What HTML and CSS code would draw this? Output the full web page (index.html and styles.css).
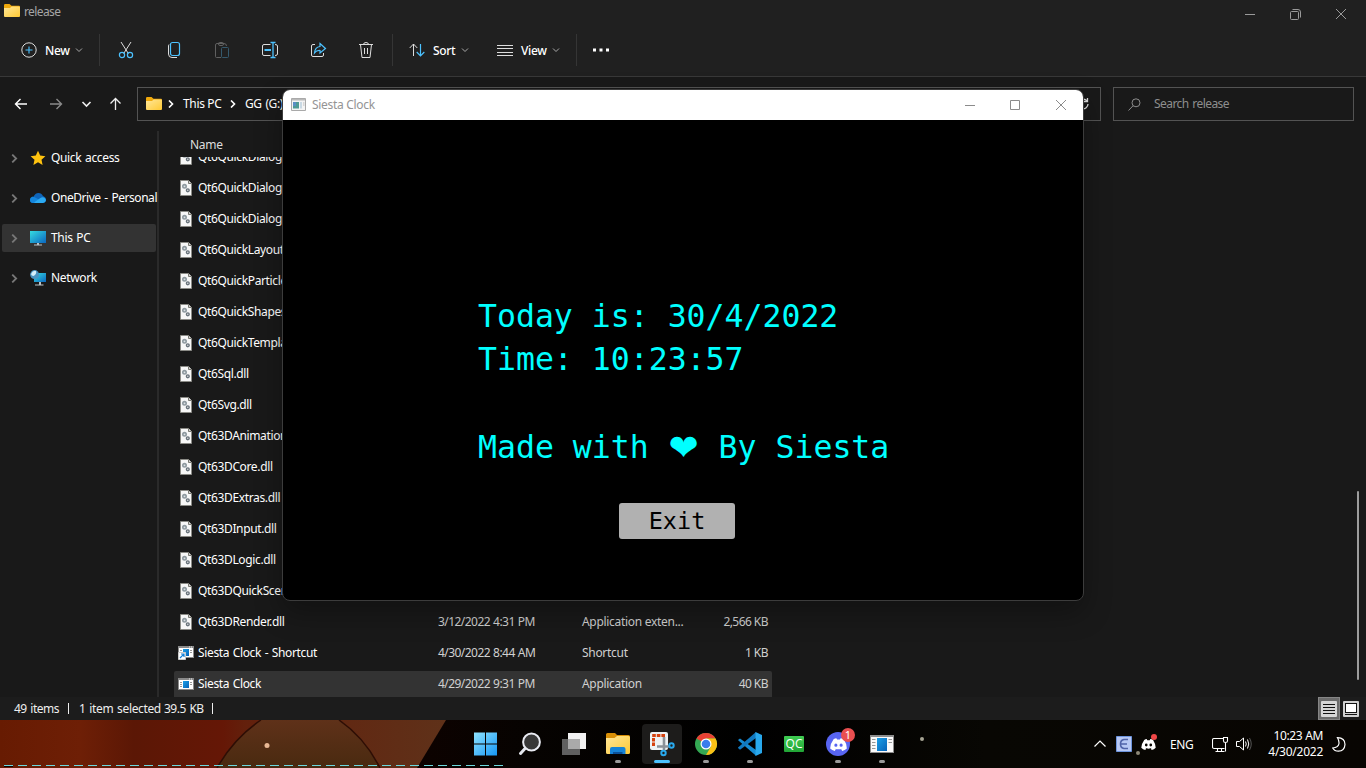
FILE: index.html
```html
<!DOCTYPE html>
<html lang="en">
<head>
<meta charset="utf-8">
<title>Siesta Clock</title>
<link rel="stylesheet" href="styles.css">
</head>
<body>
<svg class="defs" width="0" height="0">
  <defs>
    <linearGradient id="gFolder" x1="0" y1="0" x2="1" y2="1"><stop offset="0" stop-color="#ffe79a"/><stop offset="1" stop-color="#ffc933"/></linearGradient>
    <linearGradient id="gScreen" x1="0" y1="0" x2="1" y2="1"><stop offset="0" stop-color="#35dbe0"/><stop offset="1" stop-color="#0b66c0"/></linearGradient>
    <linearGradient id="gBlue" x1="0" y1="0" x2="1" y2="1"><stop offset="0" stop-color="#1ba0e8"/><stop offset="1" stop-color="#0562b8"/></linearGradient>
    <linearGradient id="gWin" x1="0" y1="0" x2="1" y2="1"><stop offset="0" stop-color="#8fe3ff"/><stop offset="1" stop-color="#1596f5"/></linearGradient>
    <symbol id="folder" viewBox="0 0 16 13"><path d="M0 1.2Q0 0 1.2 0H5.5L7.5 1.8H15Q16 1.8 16 3V6H0z" fill="#f0a90c"/><path d="M0 4H6L7.6 2.6H15Q16 2.6 16 3.6V12Q16 13 15 13H1Q0 13 0 12z" fill="url(#gFolder)"/></symbol>
    <symbol id="dll" viewBox="0 0 12 16"><path d="M.5 .5H8.5L11.5 3.5V15.5H.5z" fill="#f7f7f7" stroke="#8b8b86"/><path d="M8.5 .5V3.5H11.5" fill="#d5d5d5" stroke="#77776f"/><circle cx="4.5" cy="6.3" r="1.7" fill="#dde2e6" stroke="#8e999f" stroke-width="1.6"/><circle cx="7.8" cy="10.3" r="1.4" fill="#e8e8e8" stroke="#68727a" stroke-width="1.4"/></symbol>
    <symbol id="app" viewBox="0 0 16 12"><path d="M0 0H16V12H0z" fill="#8a8a8a"/><path d="M1 2H15V11H1z" fill="#fff"/><path d="M5 3H11V10H5z" fill="url(#gBlue)"/><path d="M2 4.500H4M2 6.500H4M2 8.500H4M12 4.500H14M12 6.500H14" stroke="#999"/><path d="M11 1h1M13 1h1" stroke="#eee"/></symbol>
    <symbol id="lnk" viewBox="0 0 16 14"><use href="#app" width="16" height="12"/><path d="M.5 6.500H7.500V13.500H.5z" fill="#fff" stroke="#ccc"/><path d="M2 12L5.600 8.400M3 8H6V11" fill="none" stroke="#1280d8" stroke-width="1.200"/></symbol>
    <symbol id="chev" viewBox="0 0 8 8"><path d="M1 2.500L4 5.500L7 2.500" fill="none" stroke="currentColor"/></symbol>
    <symbol id="right" viewBox="0 0 8 8"><path d="M2 .5L5.500 4L2 7.500" fill="none" stroke="currentColor" stroke-width="1.600"/></symbol>
    <symbol id="disc" viewBox="0 0 24 18"><path d="M5 1.5Q7 .3 9 0L10 2Q12 1.7 14 2L15 0Q17.500 .3 19.500 1.500Q23.500 7.500 23.800 14.500Q21 17.300 17.300 18L15.700 15.700L18 14.500Q12 17.200 6 14.500L8.300 15.700L6.700 18Q3 17.300 .2 14.500Q.5 7.500 5 1.500zM8.300 7.500A2.200 2.400 0 1 0 8.310 12.300A2.200 2.400 0 1 0 8.300 7.500M15.700 7.500A2.200 2.400 0 1 0 15.710 12.300A2.200 2.400 0 1 0 15.700 7.500" fill="#fff" fill-rule="evenodd"/></symbol>
  </defs>
</svg>

<div class="explorer">
  <div class="titlebar">
    <svg class="t-icon" width="16" height="13"><use href="#folder"/></svg>
    <span class="t-name">release</span>
    <svg class="caption" width="102" height="12" viewBox="0 0 102 12"><path d="M0 6.500H10M46.500 3.500H52.500Q53.500 3.500 53.500 4.500V10.500Q53.500 11.500 52.500 11.500H46.500Q45.500 11.500 45.500 10.500V4.500Q45.500 3.500 46.500 3.500M47.500 1.500H53Q55.500 1.500 55.500 4V9.500M91 1L101 11M101 1L91 11" fill="none" stroke="#9a9a9a"/></svg>
  </div>
  <div class="toolbar">
    <svg class="i-new" width="16" height="16" viewBox="0 0 16 16"><circle cx="8" cy="8" r="7.2" fill="none" stroke="#ddd"/><path d="M8 4.500V11.500M4.500 8H11.500" stroke="#4cc2ff" stroke-width="1.100"/></svg>
    <span class="l-new">New</span>
    <svg class="c-new" width="8" height="8"><use href="#chev"/></svg>
    <i class="sep s1"></i>
    <svg class="act" width="16" height="18" viewBox="0 0 16 18"><path d="M3 1L10.300 12.500M13 1L5.700 12.500" stroke="#ddd" fill="none"/><circle cx="4" cy="14" r="2.600" fill="none" stroke="#4cc2ff" stroke-width="1.200"/><circle cx="12" cy="14" r="2.600" fill="none" stroke="#4cc2ff" stroke-width="1.200"/></svg>
    <svg class="act" width="16" height="18" viewBox="0 0 16 18"><path d="M3 3.500Q2.500 4 2.500 5V13Q2.500 16.500 6 16.500H11" fill="none" stroke="#ddd"/><rect x="4.500" y="1.500" width="9" height="13" rx="2" fill="none" stroke="#4cc2ff" stroke-width="1.200"/></svg>
    <svg class="act" width="16" height="18" viewBox="0 0 16 18"><path d="M7 16.500H2.500Q1.500 16.500 1.500 15.500V4Q1.500 2.500 3 2.500H10Q12.500 2.500 12.500 5M4.500 2.500Q4.500 1.500 5.500 1.500H8.500Q9.500 1.500 9.500 3Q9.500 4.500 8 4.500H6Q4.500 4.500 4.500 3z" fill="none" stroke="#606060"/><rect x="7.500" y="6.500" width="7" height="10" rx="1" fill="none" stroke="#35596d"/></svg>
    <svg class="act rename" width="18" height="18" viewBox="0 0 18 18"><path d="M9.500 3.500H3Q1.500 3.500 1.500 5V13Q1.500 14.500 3 14.500H9.500M14 3.500Q16.500 3.500 16.500 5V13Q16.500 14.500 14 14.500" fill="none" stroke="#ddd"/><path d="M3.500 9H10" stroke="#4cc2ff" stroke-width="2"/><path d="M12 1.500V16.500M9.500 1.500H14.500M9.500 16.500H14.500" stroke="#4cc2ff" stroke-width="1.300"/></svg>
    <svg class="act rename" width="18" height="18" viewBox="0 0 18 18"><path d="M6 3.500H4Q2.500 3.500 2.500 5V14Q2.500 15.500 4 15.500H13Q14.500 15.500 14.500 14V12" fill="none" stroke="#ddd"/><path d="M11 2.500L16.500 7.500L11 12V9.500Q7.500 9.200 5.500 12Q6 6 11 5.500z" fill="none" stroke="#4cc2ff" stroke-width="1.200"/></svg>
    <svg class="act" width="16" height="18" viewBox="0 0 16 18"><path d="M1 3.500H15M2.500 3.500L4 16.500H12L13.500 3.500M5.500 3.500Q5.500 1.500 8 1.500Q10.500 1.500 10.500 3.500M6.500 7V13M9.500 7V13" fill="none" stroke="#ddd"/></svg>
    <i class="sep s2"></i>
    <svg class="i-sort" width="17" height="14" viewBox="0 0 17 14"><path d="M4.500 13V1M.7 5L4.500 1L8.300 5" fill="none" stroke="#ddd"/><path d="M11.500 1V13M7.700 9L11.500 13L15.300 9" fill="none" stroke="#4cc2ff" stroke-width="1.200"/></svg>
    <span class="l-sort">Sort</span>
    <svg class="c-sort" width="8" height="8"><use href="#chev"/></svg>
    <svg class="i-view" width="16" height="11" viewBox="0 0 16 11"><path d="M0 .5H16M0 3.500H16M0 7.500H16M0 10.500H16" stroke="#ddd"/></svg>
    <span class="l-view">View</span>
    <svg class="c-view" width="8" height="8"><use href="#chev"/></svg>
    <i class="sep s3"></i>
    <svg class="i-more" width="16" height="4" viewBox="0 0 16 4"><path d="M0 .5H3V3.500H0zM6.500 .5H9.500V3.500H6.500zM13 .5H16V3.500H13z" fill="#fff"/></svg>
  </div>
  <div class="addressrow">
    <svg class="nav" width="110" height="14" viewBox="0 0 110 14"><path d="M13 7H1.500M6.500 2L1.500 7L6.500 12" fill="none" stroke="#fff" stroke-width="1.400"/><path d="M36 7H47.500M42.500 2L47.500 7L42.500 12" fill="none" stroke="#8a8a8a" stroke-width="1.400"/><path d="M68.500 5L72.500 9L76.500 5" fill="none" stroke="#eee" stroke-width="1.600"/><path d="M101.500 13V1.500M96.500 6.500L101.500 1.500L106.500 6.500" fill="none" stroke="#eee" stroke-width="1.300"/></svg>
    <div class="address">
      <svg class="a-f" width="16" height="13"><use href="#folder"/></svg>
      <svg class="a-c1" width="8" height="8"><use href="#right"/></svg>
      <span class="a-pc">This PC</span>
      <svg class="a-c2" width="8" height="8"><use href="#right"/></svg>
      <span class="a-gg">GG (G:)</span>
      <svg class="refresh" width="13" height="14" viewBox="0 0 13 14"><path d="M11 7A4.800 4.800 0 1 1 9 3L10.500 4M10.500 1V4.500H7" fill="none" stroke="#ddd" stroke-width="1.300"/></svg>
    </div>
    <div class="search">
      <svg width="13" height="13" viewBox="0 0 13 13"><circle cx="8" cy="4.800" r="4" fill="none" stroke="#8c8c8c"/><path d="M5 7.800L.5 12.500" stroke="#8c8c8c"/></svg>
      <span>Search release</span>
    </div>
  </div>
  <div class="main">
    <div class="tree">
      <div class="node"><svg class="tw" width="9" height="9"><use href="#right"/></svg><svg width="16" height="16" viewBox="0 0 16 16"><path d="M8 .8L10.200 5.600L15.400 6.200L11.500 9.700L12.600 15L8 12.300L3.400 15L4.500 9.700L.6 6.200L5.800 5.600z" fill="#ffc30f"/></svg><span class="n1">Quick access</span></div>
      <div class="node"><svg class="tw" width="9" height="9"><use href="#right"/></svg><svg width="16" height="16" viewBox="0 0 16 16"><path d="M3.500 7Q5 3 8.500 3Q11.500 3 13 6Q16 7 16 10Q15.500 13 13 13H3Q0 13 0 10Q0 7.500 3.500 7" fill="#0f65b9"/><path d="M3 6.500L9 9.500L5 13H3Q0 12.500 0 10Q0 7 3 6.500" fill="#1486dd"/><path d="M4 12.500L10 8.300Q12 6.700 14 7.500Q16 8.500 16 10.300Q15.500 13 13 13H5z" fill="#2baaf2"/></svg><span class="n2">OneDrive - Personal</span></div>
      <div class="node on"><svg class="tw" width="9" height="9"><use href="#right"/></svg><svg width="16" height="16" viewBox="0 0 16 16"><path d="M0 1H16V13H0z" fill="url(#gScreen)"/><path d="M7 13H9V14.500H12V15.500H4V14.500H7z" fill="#b9c1c6"/></svg><span class="n3">This PC</span></div>
      <div class="node"><svg class="tw" width="9" height="9"><use href="#right"/></svg><svg width="16" height="16" viewBox="0 0 16 16"><path d="M4 3H16V12H4z" fill="url(#gScreen)"/><path d="M9 12H11V14.500H13.500V15.500H5V14.500H9z" fill="#b9c1c6"/><circle cx="4.600" cy="4.600" r="4.500" fill="#4a94c2"/><path d="M1 4Q3 0 6 1Q7 4 3.500 6Q1.500 6 1 4" fill="#d6effa"/></svg><span class="n4">Network</span></div>
    </div>
    <div class="files">
      <div class="head">Name</div>
      <div class="list">
        <div class="row"><svg width="12" height="16"><use href="#dll"/></svg><span>Qt6QuickDialogs2.dll</span></div>
        <div class="row"><svg width="12" height="16"><use href="#dll"/></svg><span>Qt6QuickDialogs2.dll</span></div>
        <div class="row"><svg width="12" height="16"><use href="#dll"/></svg><span>Qt6QuickDialogs2.dll</span></div>
        <div class="row"><svg width="12" height="16"><use href="#dll"/></svg><span>Qt6QuickLayouts.dll</span></div>
        <div class="row"><svg width="12" height="16"><use href="#dll"/></svg><span>Qt6QuickParticles.dll</span></div>
        <div class="row"><svg width="12" height="16"><use href="#dll"/></svg><span>Qt6QuickShapes.dll</span></div>
        <div class="row"><svg width="12" height="16"><use href="#dll"/></svg><span>Qt6QuickTemplates2.dll</span></div>
        <div class="row"><svg width="12" height="16"><use href="#dll"/></svg><span>Qt6Sql.dll</span></div>
        <div class="row"><svg width="12" height="16"><use href="#dll"/></svg><span>Qt6Svg.dll</span></div>
        <div class="row"><svg width="12" height="16"><use href="#dll"/></svg><span>Qt63DAnimation.dll</span></div>
        <div class="row"><svg width="12" height="16"><use href="#dll"/></svg><span>Qt63DCore.dll</span></div>
        <div class="row"><svg width="12" height="16"><use href="#dll"/></svg><span>Qt63DExtras.dll</span></div>
        <div class="row"><svg width="12" height="16"><use href="#dll"/></svg><span>Qt63DInput.dll</span></div>
        <div class="row"><svg width="12" height="16"><use href="#dll"/></svg><span>Qt63DLogic.dll</span></div>
        <div class="row"><svg width="12" height="16"><use href="#dll"/></svg><span>Qt63DQuickScene2D.dll</span></div>
        <div class="row"><svg width="12" height="16"><use href="#dll"/></svg><span>Qt63DRender.dll</span><em class="date">3/12/2022 4:31 PM</em><em class="type">Application exten...</em><em class="size">2,566 KB</em></div>
        <div class="row"><svg class="wide" width="16" height="14"><use href="#lnk"/></svg><span class="app-name">Siesta Clock - Shortcut</span><em class="date">4/30/2022 8:44 AM</em><em class="type">Shortcut</em><em class="size">1 KB</em></div>
        <div class="row sel"><svg class="wide" width="16" height="12"><use href="#app"/></svg><span class="app-name">Siesta Clock</span><em class="date">4/29/2022 9:31 PM</em><em class="type">Application</em><em class="size">40 KB</em></div>
      </div>
    </div>
    <div class="scroll"></div>
  </div>
  <div class="status">
    <span class="st1">49 items</span><i></i><span class="st2">1 item selected</span><span class="st3">39.5 KB</span><i class="last"></i>
    <div class="modes">
      <div class="mode on"><svg width="16" height="16" viewBox="0 0 16 16"><rect width="16" height="16" rx="1" fill="#d6d6d6"/><path d="M2 3.500H14M2 6.500H14M2 9.500H14M2 12.500H14" stroke="#111"/></svg></div>
      <div class="mode"><svg width="16" height="16" viewBox="0 0 16 16"><rect width="16" height="16" rx="1" fill="#d0d0d0"/><rect x="2.500" y="2.500" width="11" height="9" fill="#fff" stroke="#111"/><path d="M2 13.500H14" stroke="#111"/></svg></div>
    </div>
  </div>
</div>

<div class="clock">
  <div class="cbar">
    <svg class="cicon" width="15" height="13" viewBox="0 0 15 13"><path d="M.5 .5H14.500V12.500H.5z" fill="#f4f4f4" stroke="#a9a9a9"/><path d="M1 1H14V2.500H1z" fill="#b9b9b9"/><path d="M2 4H8V10.500H2z" fill="#4f9a94"/><path d="M2 4H5V8H2z" fill="#5b8fc4"/><path d="M9 4H11V10.500H9z" fill="#c9d9e4"/><path d="M12 4H13.500V8H12z" fill="#d6d6d6"/></svg>
    <span>Siesta Clock</span>
    <svg class="cctl" width="103" height="12" viewBox="0 0 103 12"><path d="M0 6.500H10M45.500 1.500H54.500V10.500H45.500zM91 1L101 11M101 1L91 11" fill="none" stroke="#8b8b8b"/></svg>
  </div>
  <div class="cbody">
    <div class="ln">Today is: 30/4/2022</div>
    <div class="ln">Time: 10:23:57</div>
    <div class="ln made">Made with <span class="heart">❤</span> By Siesta</div>
    <button class="exit">Exit</button>
  </div>
</div>

<div class="taskbar">
  <svg class="wall" width="1366" height="48" viewBox="0 0 1366 48">
    <defs><linearGradient id="gw"><stop offset="0" stop-color="#671b02"/><stop offset=".18" stop-color="#6e1f06"/><stop offset=".3" stop-color="#5b1705"/><stop offset=".5" stop-color="#651706"/><stop offset=".55" stop-color="#63200c"/><stop offset="1" stop-color="#5f3119"/></linearGradient><linearGradient id="gc" x1="0" y1="0" x2="0" y2="1"><stop offset="0" stop-color="#5f3119"/><stop offset="1" stop-color="#492a10"/></linearGradient><linearGradient id="gk"><stop offset="0" stop-color="#0d0200"/><stop offset=".12" stop-color="#060301"/><stop offset=".35" stop-color="#000"/><stop offset=".6" stop-color="#080703"/><stop offset="1" stop-color="#080502"/></linearGradient></defs>
    <path d="M417 0H1366V48H417z" fill="url(#gk)"/>
    <path d="M0 0H446L417 48H0z" fill="url(#gw)"/>
    <path d="M217 48Q234 18 261 0H339Q365 18 380 48z" fill="url(#gc)"/>
    <path d="M217 48Q234 18 261 0M339 0Q365 18 380 48" fill="none" stroke="#2e0e05" stroke-width="1.500"/>
    <circle cx="267" cy="25.500" r="2.500" fill="#e9b894"/><circle cx="922" cy="19" r="2" fill="#a7a594"/><circle cx="1138" cy="33" r="2" fill="#8d8877"/>
    <path d="M4 45.500H503" stroke="#6bd9dd" stroke-dasharray="9 5"/>
    <path d="M4 46.500H13" stroke="#100"/>
  </svg>
  <div class="apps">
    <div class="app"><svg width="24" height="24" viewBox="0 0 24 24"><path d="M0 .5H11V11.500H0zM12 .5H23V11.500H12zM0 12.500H11V23.500H0zM12 12.500H23V23.500H12z" fill="url(#gWin)"/></svg></div>
    <div class="app"><svg width="24" height="24" viewBox="0 0 24 24"><path d="M7.500 16L2.500 21.500" stroke="#e4e7ee" stroke-width="3" stroke-linecap="round"/><circle cx="13.500" cy="10" r="8.400" fill="#383838" stroke="#e9ebf2" stroke-width="2"/></svg></div>
    <div class="app"><svg width="24" height="24" viewBox="0 0 24 24"><rect x="6" y="1" width="18" height="16" fill="#f2f2f2"/><rect x="0" y="7" width="18" height="16" fill="#606060"/><rect x="6" y="7" width="12" height="10" fill="#aaa"/></svg></div>
    <div class="app"><svg width="24" height="24" viewBox="0 0 24 24"><path d="M0 2.500Q0 1 1.500 1H9L11 3H22.500Q24 3 24 4.500V8H0z" fill="#d98f06"/><path d="M0 6H8.500L11 4H22.500Q24 4 24 5.500V20.500Q24 22 22.500 22H1.500Q0 22 0 20.500z" fill="url(#gFolder)"/><path d="M4 22V17Q4 15 6 15H17.500Q19.500 15 19.500 17V22z" fill="#1683d6"/><path d="M7 22V20H16.500V22z" fill="#0a5098"/></svg><i class="pill"></i></div>
    <div class="app active"><svg width="26" height="26" viewBox="0 0 26 26"><rect x="1" y="1" width="18" height="18" rx="2" fill="#eef2f4"/><path d="M16 4.500H3M4.500 7V15" fill="none" stroke="#d5420f" stroke-width="3" stroke-dasharray="3.600 1"/><path d="M15 6V19M8 15.500H21" stroke="#8b9299" stroke-width="2.600"/><circle cx="14.500" cy="22" r="2.200" fill="none" stroke="#29a9ed" stroke-width="2"/><circle cx="22.500" cy="14.500" r="2.200" fill="none" stroke="#29a9ed" stroke-width="2"/></svg><i class="pill"></i></div>
    <div class="app"><svg width="24" height="24" viewBox="0 0 24 24"><circle cx="12" cy="12" r="11" fill="#34a853"/><path d="M12 12L2.470 6.500A11 11 0 0 1 21.530 6.500H12z" fill="#e94235"/><path d="M12 6.500H21.530A11 11 0 0 1 12 23L16.800 14.700z" fill="#fbc116"/><circle cx="12" cy="12" r="5.500" fill="#fff"/><circle cx="12" cy="12" r="4.300" fill="#3b7ded"/></svg><i class="pill"></i></div>
    <div class="app"><svg width="24" height="24" viewBox="0 0 24 24"><path d="M0 8L2 6.500L18 18V23.800L1 9z" fill="#168bd2"/><path d="M0 16L2 17.700L18 6V0L0 15.500z" fill="#1179c0"/><path d="M17.500 0L24 3V21L17.500 24z" fill="#28a8ec"/></svg><i class="pill"></i></div>
    <div class="app"><div class="qc">QC</div></div>
    <div class="app"><div class="dc"><svg width="17" height="13"><use href="#disc"/></svg><b>1</b></div><i class="pill"></i></div>
    <div class="app"><svg width="24" height="18" viewBox="0 0 24 18"><path d="M0 0H24V18H0z" fill="#8d8d8d"/><path d="M1 2H23V17H1z" fill="#fafafa"/><path d="M7 3H17V16H7z" fill="url(#gBlue)"/><path d="M2 4.500H5.500M2 7.500H5.500M2 10.500H5.500M2 13.500H5.500M18.500 4.500H22M18.500 7.500H22" stroke="#999"/></svg><i class="pill"></i></div>
  </div>
  <div class="tray">
    <svg class="up" width="12" height="8" viewBox="0 0 12 8"><path d="M.5 6.500L6 1L11.500 6.500" fill="none" stroke="#fff" stroke-width="1.200"/></svg>
    <svg class="ebox" width="16" height="16" viewBox="0 0 16 16"><path d="M.5 .5H15.500V15.500H.5z" fill="#b7c8f4" stroke="#6d94dd"/><path d="M12 3.500H8Q4.500 4 4.500 8Q4.500 12 8 12.500H12M4.500 8H11" fill="none" stroke="#5063a8" stroke-width="1.600"/></svg>
    <div class="dtray"><svg width="15" height="11"><use href="#disc"/></svg><b></b></div>
    <span class="lang">ENG</span>
    <svg class="net" width="17" height="17" viewBox="0 0 17 17"><path d="M11 2.500H2Q.5 2.500 .5 4V11Q.5 12.500 2 12.500H12.500M3.500 15.500H12.500M5.500 12.500V15.500M9.500 12.500V15.500M11.500 1.500H15.500V5Q15.500 6.500 13.500 6.500Q11.500 6.500 11.500 5zM13.500 6.500V15.500" fill="none" stroke="#fff" stroke-width="1.100"/></svg>
    <svg class="vol" width="17" height="14" viewBox="0 0 17 14"><path d="M.5 4.500H3.500L7.500 1V13L3.500 9.500H.5z" fill="none" stroke="#fff"/><path d="M9.500 4.500Q11 7 9.500 9.500M11.500 2.500Q14 7 11.500 11.500" fill="none" stroke="#fff"/><path d="M13.500 1Q17 7 13.500 13" fill="none" stroke="#555"/></svg>
    <div class="when"><span>10:23 AM</span><span class="d">4/30/2022</span></div>
    <svg class="moon" width="14" height="15" viewBox="0 0 14 15"><path d="M5.500 .7Q13 1 13 7.500Q12.500 14 6.500 14.200Q2.500 14.200 .7 11Q6.500 10.500 7 6.500Q7.200 3.500 5.500 .7z" fill="none" stroke="#fff" stroke-width="1.200"/></svg>
  </div>
</div>
</body>
</html>
```
FILE: styles.css
```css
* { box-sizing: border-box; }
body { margin: 0; width: 1366px; height: 768px; overflow: hidden; position: relative; background: #000; color: #fff; font-family: "Noto Sans", "Open Sans", sans-serif; font-size: 12px; line-height: 16px; }
svg { display: block; flex: none; }
span, em { white-space: nowrap; font-style: normal; flex: none; }
.defs { position: absolute; }
.explorer { height: 720px; display: flex; flex-direction: column; background: #191919; }

.titlebar { height: 26px; background: #202020; display: flex; align-items: flex-start; padding: 4px 19px 0 4px; }
.t-icon { width: 16px; }
.t-name { margin-left: 4px; color: #a6a6a6; letter-spacing: -.6px; }
.caption { margin-left: auto; margin-top: 4px; }

.toolbar { height: 51px; background: #202020; border-bottom: 1px solid #383838; display: flex; align-items: center; padding: 0 0 2px 21px; font-weight: 500; letter-spacing: -.3px; color: #fff; }
.toolbar span { padding-top: 2px; }
.l-new { margin-left: 8px; width: 26px; }
.c-new { margin-left: 4px; color: #aaa; }
.sep { width: 1px; height: 32px; background: #353535; flex: none; }
.s1 { margin-left: 16px; margin-right: 2px; }
.act { width: 16px; margin: 0 16px; }
.act.rename { width: 18px; margin: 0 15px; }
.s2 { margin-left: 2px; }
.i-sort { margin-left: 16px; }
.l-sort { margin-left: 7px; width: 23px; }
.c-sort { margin-left: 5px; color: #aaa; }
.i-view { margin-left: 28px; }
.l-view { margin-left: 8px; width: 27px; }
.c-view { margin-left: 4px; color: #aaa; }
.s3 { margin-left: 16px; }
.i-more { margin-left: 16px; }

.addressrow { height: 54px; display: flex; align-items: center; padding: 0 12px 0 14px; flex: none; }
.nav { width: 110px; }
.address { margin-left: 13px; width: 964px; height: 34px; border: 1px solid #535353; display: flex; align-items: center; padding-left: 8px; }
.a-f { margin-top: -2px; }
.a-c1 { margin-left: 5px; }
.a-pc { margin-left: 8px; width: 40px; letter-spacing: -.35px; }
.a-c2 { margin-left: 6px; }
.a-gg { margin-left: 8px; letter-spacing: -.4px; word-spacing: 1px; }
.refresh { margin-left: auto; margin-right: 10px; }
.search { margin-left: 12px; width: 241px; height: 34px; border: 1px solid #535353; display: flex; align-items: center; padding-left: 14px; color: #8e8e8e; }
.search span { margin-left: 13px; letter-spacing: -.55px; word-spacing: 1px; }

.main { height: 566px; display: flex; flex: none; }
.tree { width: 159px; border-right: 2px solid #2a2a2a; padding: 13px 1px 0 2px; display: flex; flex-direction: column; gap: 12px; }
.node { height: 28px; flex: none; display: flex; align-items: center; border-radius: 2px; padding-left: 8px; }
.node.on { background: #333; }
.tw { color: #777; margin-right: 11px; }
.node span { margin-left: 5px; letter-spacing: -.35px; word-spacing: 1px; }
.node .n2 { letter-spacing: -.45px; }
.files { width: 1198px; padding-left: 15px; display: flex; flex-direction: column; }
.head { height: 26px; padding: 6px 0 0 16px; color: #ddd; letter-spacing: -.3px; flex: none; }
.list { flex: 1; overflow: hidden; }
.row { height: 31px; width: 598px; display: flex; align-items: center; padding-left: 6px; letter-spacing: -.36px; }
.row:first-child { margin-top: -16px; }
.row svg { margin-right: 6px; }
.row .wide { margin-left: -2px; margin-right: 4px; }
.row span { width: 240px; }
.row .app-name { letter-spacing: -.35px; word-spacing: .8px; }
.row em { color: #d0d0d0; }
.row .date { width: 144px; letter-spacing: -.55px; word-spacing: .5px; }
.type { width: 110px; }
.row .type { letter-spacing: -.3px; }
.row .size { width: 76px; text-align: right; letter-spacing: -.55px; }
.sel { background: #333; height: 26px; margin-top: 3px; border-radius: 2px 2px 0 0; }
.scroll { width: 2px; height: 189px; margin-top: 360px; background: #9d9d9d; border-radius: 1px; }

.status { height: 23px; background: #1c1c1c; display: flex; align-items: center; padding-left: 14px; color: #eee; flex: none; letter-spacing: -.5px; word-spacing: 1px; }
.st1 { width: 54px; }
.st2 { margin-left: 10px; width: 85px; }
.status .st2 { letter-spacing: -.35px; }
.st3 { width: 48px; }
.status i { width: 1px; height: 11px; background: #eee; }
.modes { margin-left: auto; display: flex; margin-right: 4px; }
.mode { width: 22px; height: 23px; display: flex; align-items: center; justify-content: center; }
.mode.on { background: #6b6b6b; border: 1px solid #868686; }

.clock { position: absolute; left: 282px; top: 89px; width: 802px; height: 512px; border: 1px solid #3c3c3c; border-radius: 8px; overflow: hidden; background: #000; box-shadow: 0 12px 28px rgba(0,0,0,.3); }
.cbar { height: 30px; background: #fff; display: flex; align-items: center; padding: 0 15px 1px 8px; color: #949494; }
.cbar span { margin-left: 6px; letter-spacing: -.3px; padding-top: 1px; }
.cctl { margin-left: auto; }
.cbody { height: 480px; padding: 175px 0 0 195px; font-family: "DejaVu Sans Mono", monospace; font-size: 31.500px; line-height: 43px; color: #0ff; display: flex; flex-direction: column; align-items: flex-start; }
.ln { height: 43px; white-space: pre; }
.made { margin-top: 45px; }
.heart { display: inline-block; width: 32px; height: 43px; vertical-align: top; text-align: center; font-family: "DejaVu Sans", sans-serif; font-size: 36px; }
.exit { margin: 34px 0 0 141px; width: 116px; height: 36px; border: 0; border-radius: 3px; background: #b1b1b1; color: #000; font: 23.500px/36px "DejaVu Sans Mono", monospace; padding: 0; }

.taskbar { height: 48px; position: relative; display: flex; }
.wall { position: absolute; left: 0; top: 0; }
.apps { position: relative; display: flex; margin-left: 464px; }
.app { width: 44px; height: 48px; display: flex; flex-direction: column; align-items: center; justify-content: center; position: relative; }
.active::before { content: ""; position: absolute; left: 2px; right: 2px; top: 4px; bottom: 4px; background: #1d1c1b; border-radius: 4px; }
.active svg { position: relative; }
.pill { position: absolute; bottom: 5px; width: 6px; height: 3px; border-radius: 2px; background: #9a9a9a; }
.active .pill { width: 16px; background: #4cc2ff; }
.qc { width: 20px; height: 16px; background: linear-gradient(#40cd53, #21a536); border-radius: 1px; font: 12px/16px "Open Sans", sans-serif; text-align: center; }
.dc { width: 24px; height: 24px; border-radius: 50%; background: #5865f2; display: flex; align-items: center; justify-content: center; position: relative; }
.dc b { position: absolute; right: -5px; top: -4px; width: 14px; height: 14px; border-radius: 50%; background: #e94f50; font: 11px/14px "Noto Sans", sans-serif; text-align: center; }
.tray { position: relative; margin-left: auto; display: flex; align-items: center; padding-right: 20px; }
.up { margin-right: 10px; }
.dtray { margin-left: 9px; position: relative; padding-top: 1px; }
.dtray b { position: absolute; right: -1px; top: -4px; width: 6px; height: 6px; border-radius: 50%; background: #f04747; }
.lang { margin-left: 14px; width: 24px; letter-spacing: -.4px; padding-top: 2px; }
.net { margin-left: 18px; }
.vol { margin-left: 7px; }
.when { margin-left: 13px; width: 57px; display: flex; flex-direction: column; align-items: flex-end; font-size: 12px; letter-spacing: -.35px; }
.when .d { letter-spacing: -.25px; }
.moon { margin-left: 9px; }
```
